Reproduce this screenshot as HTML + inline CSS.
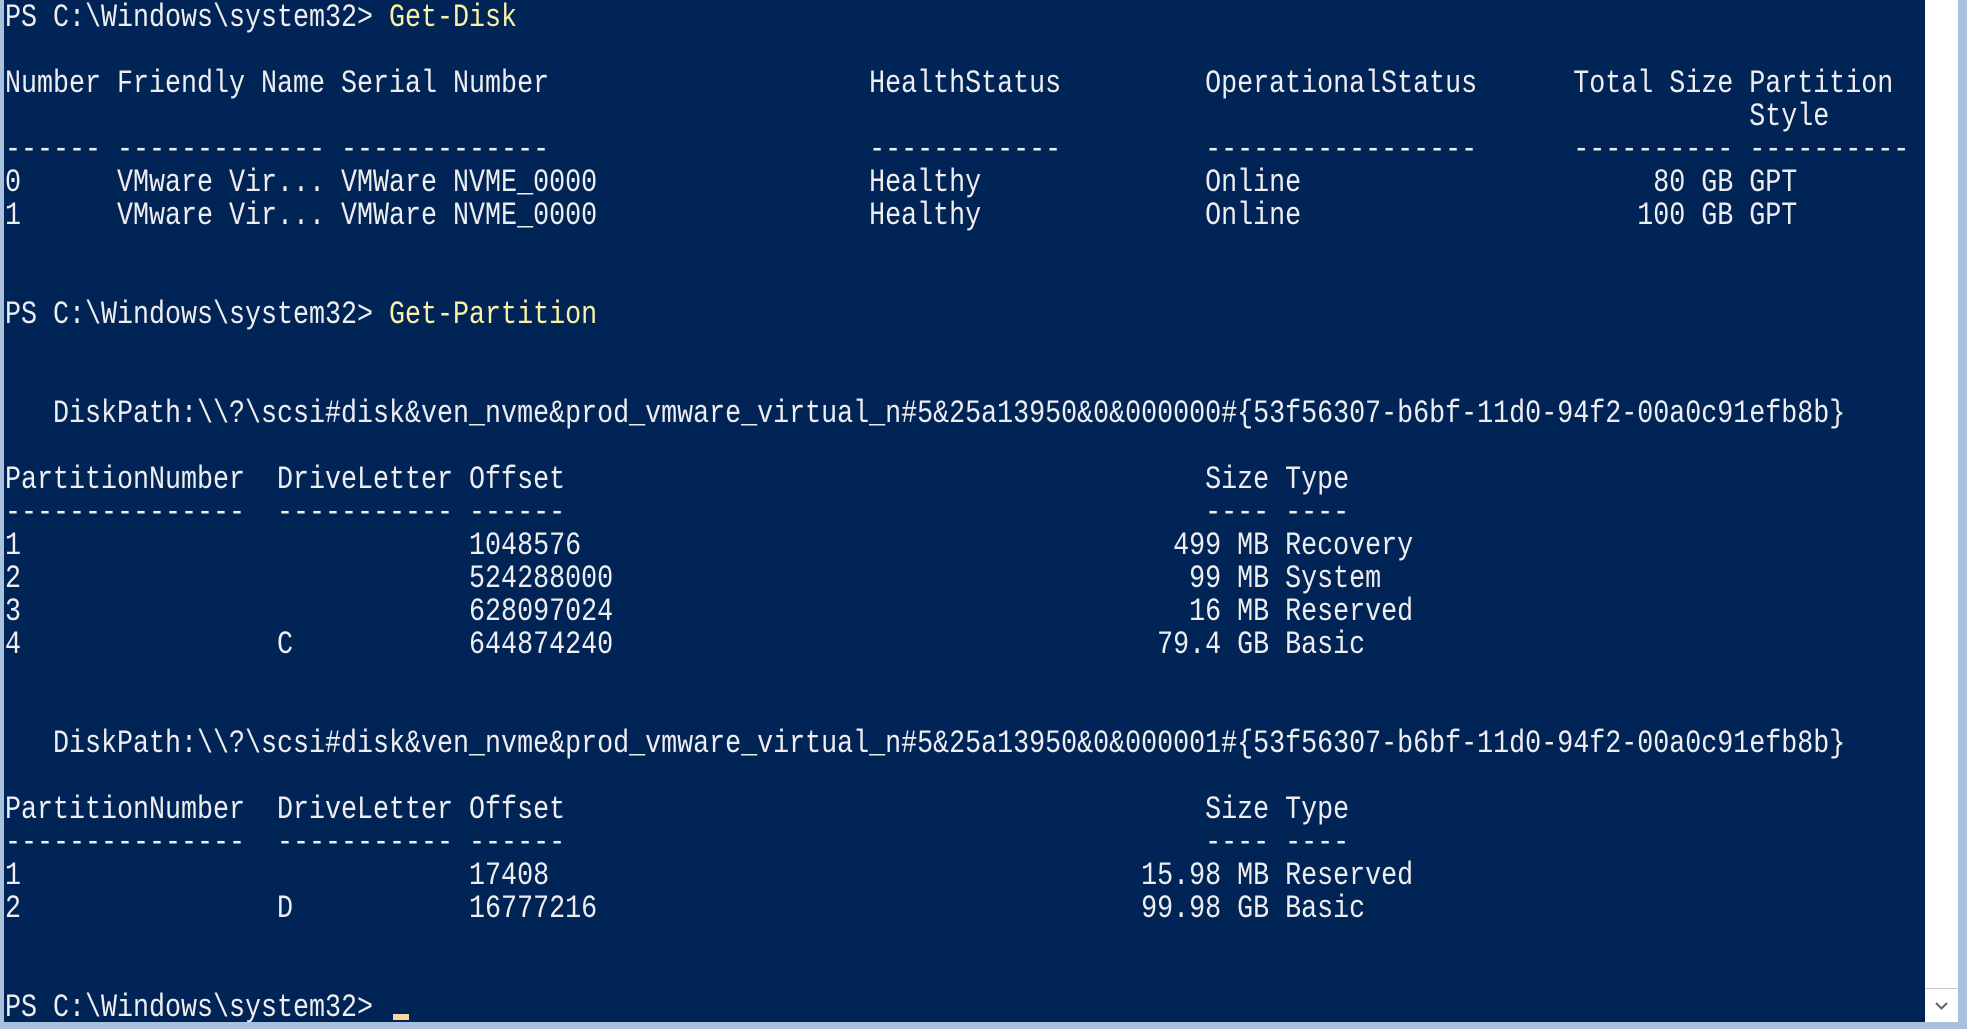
<!DOCTYPE html>
<html><head><meta charset="utf-8"><style>
html,body{margin:0;padding:0;width:1967px;height:1029px;overflow:hidden;background:#a9c1dc;}
#con{position:absolute;left:4px;top:0;width:1921px;height:1022px;background:#012456;overflow:hidden;}
pre{position:absolute;left:1px;top:1px;margin:0;font-family:"Liberation Mono",monospace;font-size:32px;line-height:33px;color:#eeedf0;transform:scaleX(0.8333);transform-origin:0 0;white-space:pre;}
.y{color:#f9f1a5;}
#sb{position:absolute;left:1925px;top:0;width:33px;height:1022px;background:#fff;}
#arr{position:absolute;left:0;bottom:0;width:33px;height:33px;border-top:1px solid #c8c8c8;}
#cur{position:absolute;left:389px;top:1014px;width:16px;height:6px;background:#f6d7a0;}
</style></head><body>
<div id="con">
<pre>PS C:\Windows\system32&gt; <span class="y">Get-Disk</span>

Number Friendly Name Serial Number                    HealthStatus         OperationalStatus      Total Size Partition
                                                                                                             Style
------ ------------- -------------                    ------------         -----------------      ---------- ----------
0      VMware Vir... VMWare NVME_0000                 Healthy              Online                      80 GB GPT
1      VMware Vir... VMWare NVME_0000                 Healthy              Online                     100 GB GPT


PS C:\Windows\system32&gt; <span class="y">Get-Partition</span>


   DiskPath:\\?\scsi#disk&amp;ven_nvme&amp;prod_vmware_virtual_n#5&amp;25a13950&amp;0&amp;000000#{53f56307-b6bf-11d0-94f2-00a0c91efb8b}

PartitionNumber  DriveLetter Offset                                        Size Type
---------------  ----------- ------                                        ---- ----
1                            1048576                                     499 MB Recovery
2                            524288000                                    99 MB System
3                            628097024                                    16 MB Reserved
4                C           644874240                                  79.4 GB Basic


   DiskPath:\\?\scsi#disk&amp;ven_nvme&amp;prod_vmware_virtual_n#5&amp;25a13950&amp;0&amp;000001#{53f56307-b6bf-11d0-94f2-00a0c91efb8b}

PartitionNumber  DriveLetter Offset                                        Size Type
---------------  ----------- ------                                        ---- ----
1                            17408                                     15.98 MB Reserved
2                D           16777216                                  99.98 GB Basic


PS C:\Windows\system32&gt; </pre>
<div id="cur"></div>
</div>
<div id="sb"><div id="arr"><svg width="33" height="33" viewBox="0 0 33 33"><path d="M11 14 L16.5 19.5 L22 14" fill="none" stroke="#606060" stroke-width="2"/></svg></div></div>
</body></html>
